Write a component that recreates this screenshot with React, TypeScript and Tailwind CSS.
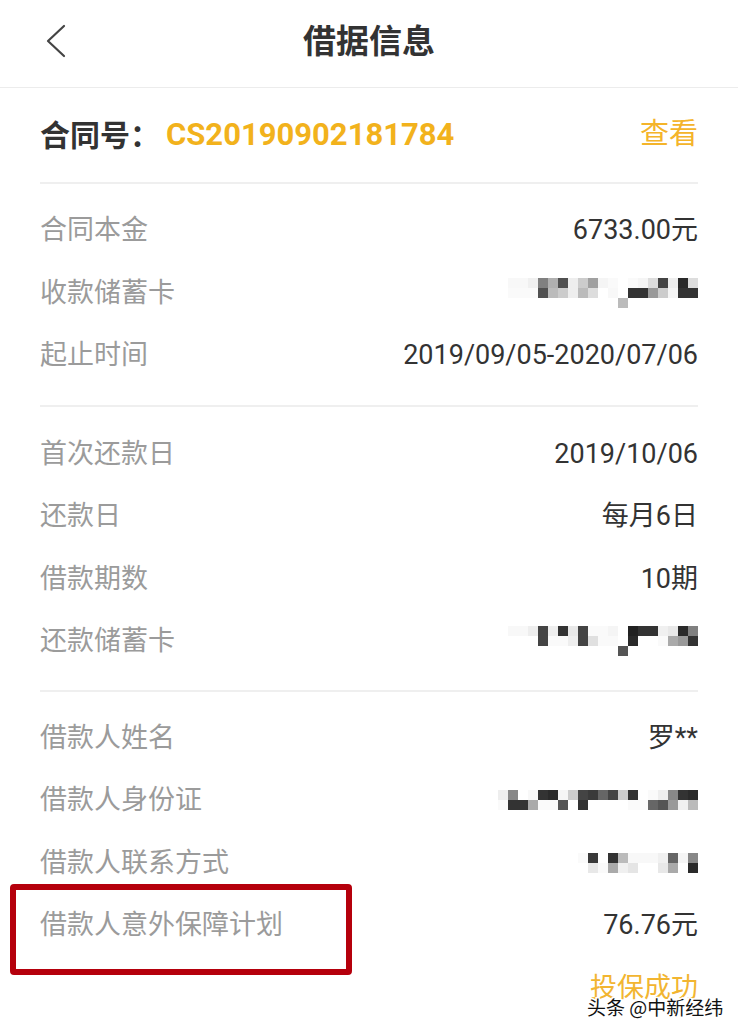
import React from 'react';

// mosaic cells are 10px grey squares, one hex byte per cell
type Mosaic = string[][];

const cardMosaic: Mosaic = [
  ['f8', 'f8', 'f0', '80', 'b0', '50', 'ee', 'cc', 'a0', 'f5', 'fa', 'ff', 'fa', 'f5', 'dd', '44', 'ee', '2a', 'dd'],
  ['fa', 'fa', 'fa', '50', 'bb', 'cc', 'ee', 'bb', 'dd', 'ff', 'f8', 'ff', '33', '33', '99', 'cc', 'f5', '33', '33'],
  ['ff', 'ff', 'ff', 'ff', 'ff', 'ff', 'ff', 'ff', 'ff', 'ff', 'ff', 'bb', 'ff', 'ff', 'ff', 'ff', 'ff', 'ff', 'ff'],
];

const repayMosaic: Mosaic = [
  ['f8', 'f8', 'ee', '44', 'ee', '33', 'e8', '44', 'fa', 'fa', 'f5', 'ff', '22', '33', '33', 'f0', 'e8', '2a', '80'],
  ['ff', 'ff', 'ff', '44', 'fa', 'fa', 'ee', '44', 'e0', 'fa', 'fa', 'ff', '2a', 'ff', 'ff', 'fa', 'aa', '99', '33'],
  ['ff', 'ff', 'ff', 'ff', 'ff', 'ff', 'ff', 'ff', 'ff', 'ff', 'ff', '55', 'ff', 'ff', 'ff', 'ff', 'ff', 'ff', 'ff'],
];

const idMosaic: Mosaic = [
  ['ee', '88', 'ff', 'f8', '33', '2a', 'f5', 'cc', '44', '3a', '66', '44', 'cc', '33', 'ff', 'fa', 'ee', '88', '33', '2a'],
  ['fa', '33', '33', 'aa', 'fa', 'fa', '55', 'ff', '33', 'ff', 'ff', 'ff', 'ff', 'fa', 'fa', '66', '55', '99', 'f0', 'bb'],
];

const phoneMosaic: Mosaic = [
  ['fa', '3a', 'ff', '33', 'bb', 'f8', 'f8', 'f8', 'f0', '66', 'f5', '88'],
  ['ff', 'e8', 'fa', 'aa', 'f0', 'e5', 'ff', 'ff', 'e8', 'aa', 'ff', '2a'],
];

function Pixelated({ cells }: { cells: Mosaic }) {
  return (
    <div className="flex flex-col">
      {cells.map((row, i) => (
        <div key={i} className="flex">
          {row.map((c, j) => (
            <div key={j} className="w-[10px] h-[10px]" style={{ backgroundColor: `#${c}${c}${c}` }} />
          ))}
        </div>
      ))}
    </div>
  );
}

function Row({ label, children }: { label: string; children: React.ReactNode }) {
  return (
    <div className="h-[62.5px] flex items-center justify-between">
      <span className="text-[27px] text-[#9b9b9b]">{label}</span>
      <div className="text-[27px] text-[#333]">{children}</div>
    </div>
  );
}

function Divider() {
  return <div className="h-[2px] bg-[#efefef]" />;
}

export default function App() {
  return (
    <div className="relative w-[738px] h-[1033px] overflow-hidden bg-white font-['Roboto','Noto_Sans_CJK_SC',sans-serif]">
      {/* title bar */}
      <div className="relative h-[88px] border-b border-[#ececec] flex items-center justify-center">
        <svg className="absolute left-[44px] top-[24px]" width="24" height="34" viewBox="0 0 24 34" fill="none">
          <polyline points="20,2 4,17 20,32" stroke="#444" strokeWidth="2.2" strokeLinecap="round" strokeLinejoin="round" />
        </svg>
        <h1 className="text-[33px] font-bold text-[#333] -mt-[4px]">借据信息</h1>
      </div>

      <div className="px-10">
        <div className="h-[94px] flex items-center justify-between">
          <div className="flex items-center">
            <span className="text-[30px] font-bold text-[#333]">合同号：</span>
            <span className="ml-[6px] text-[31px] font-bold text-[#f2b21c]">CS20190902181784</span>
          </div>
          <span className="text-[29px] text-[#f4b42a]">查看</span>
        </div>
        <Divider />

        <div className="pt-[15px] pb-[18px]">
          <Row label="合同本金">6733.00元</Row>
          <Row label="收款储蓄卡">
            <Pixelated cells={cardMosaic} />
          </Row>
          <Row label="起止时间">2019/09/05-2020/07/06</Row>
        </div>
        <Divider />

        <div className="pt-[16px] pb-[17px]">
          <Row label="首次还款日">2019/10/06</Row>
          <Row label="还款日">每月6日</Row>
          <Row label="借款期数">10期</Row>
          <Row label="还款储蓄卡">
            <Pixelated cells={repayMosaic} />
          </Row>
        </div>
        <Divider />

        <div className="pt-[15px]">
          <Row label="借款人姓名">罗**</Row>
          <Row label="借款人身份证">
            <Pixelated cells={idMosaic} />
          </Row>
          <Row label="借款人联系方式">
            <Pixelated cells={phoneMosaic} />
          </Row>
          <Row label="借款人意外保障计划">76.76元</Row>
          <div className="h-[62.5px] flex items-center justify-end">
            <span className="text-[27px] text-[#f2b531]">投保成功</span>
          </div>
        </div>
      </div>

      {/* red annotation box */}
      <div className="absolute left-[10px] top-[884px] w-[342px] h-[91px] border-[6px] border-[#b5000c] rounded-[4px]" />

      {/* watermark */}
      <div className="absolute left-[587px] top-[993px] text-[19px] text-[#111] font-['Noto_Sans_CJK_SC',sans-serif] [paint-order:stroke_fill] [-webkit-text-stroke:3px_#fff] whitespace-nowrap">
        头条 @中新经纬
      </div>
    </div>
  );
}
